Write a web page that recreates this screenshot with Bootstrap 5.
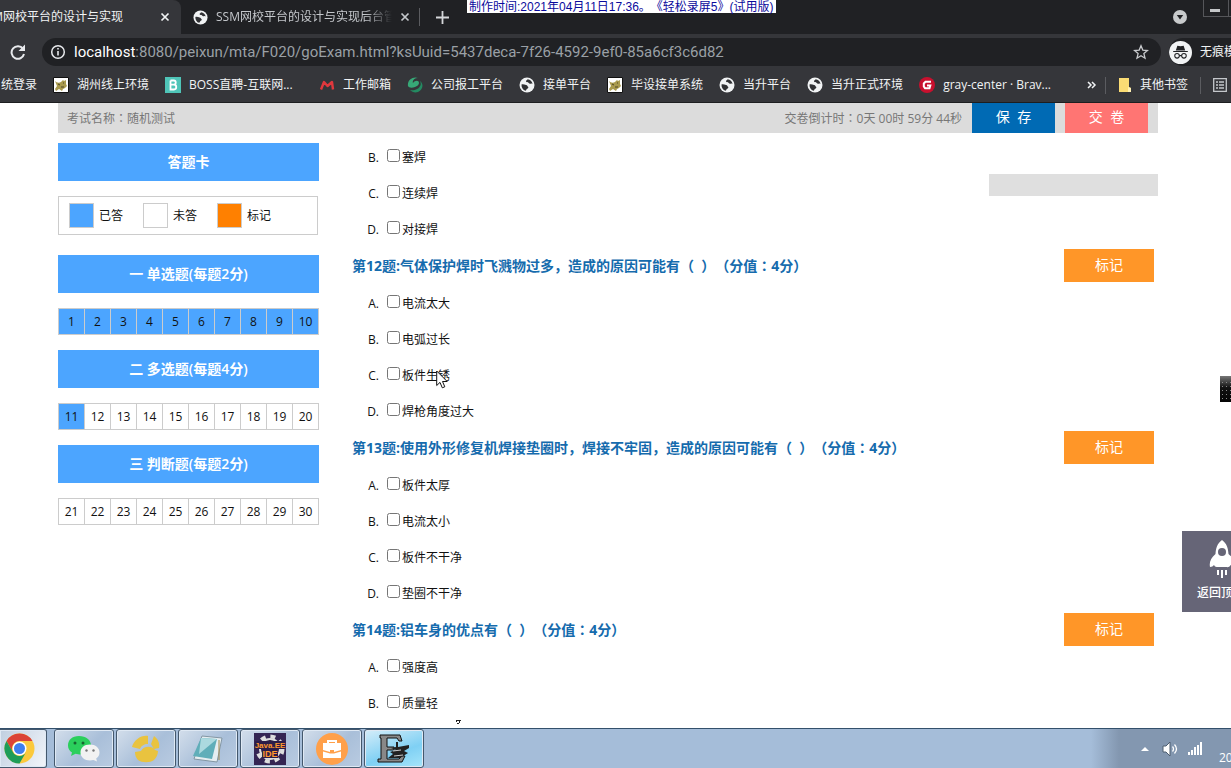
<!DOCTYPE html>
<html lang="zh-CN">
<head>
<meta charset="utf-8">
<meta name="viewport" content="width=device-width, initial-scale=1">
<title>随机测试</title>
<link href="https://cdn.jsdelivr.net/npm/bootstrap@5.3.0/dist/css/bootstrap.min.css" rel="stylesheet">
<style>
body{font:12px/20px "Open Sans","Noto Sans CJK SC",sans-serif;color:#111;background:#fff;text-spacing-trim:space-all;font-feature-settings:"chws" 0;font-kerning:none}
a{color:inherit;text-decoration:none}
svg{display:block;flex:none}
ol,ul{list-style:none;margin:0;padding:0}
/* centred full-width colon */
.colon{font-family:"Noto Sans CJK JP",sans-serif;line-height:1}
/* browser chrome */
.tabstrip{height:34px;background:#202124;color:#c4c7cb}
.tab-on{width:181px;background:#35363a;border-radius:0 8px 0 0;color:#f1f3f4;padding-right:11px}
.tab-on .tab-name{width:123px}
.tab-two{width:230px}
.tab-two .tab-name{width:176px;-webkit-mask-image:linear-gradient(90deg,#000 85%,transparent)}
.tab-x{width:10px;height:10px;padding:0;border:0;background:none;color:inherit}
.strip-line{width:1px;height:18px;background:#5b5c60}
.win-btn{width:28px;height:17px;border:1px solid #55565a;border-top:0;border-right:0;background:none;padding:0}
.stamp{left:467px;top:0;height:13px;padding:0 2px;background:#fff;color:#0a0a9c;font:12px/14px "Liberation Sans","Noto Sans CJK SC",sans-serif;z-index:5}
.toolbar{height:36px;background:#35363a}
.reload{margin:0 16px 0 8px}
.address{height:28px;background:#202124;border-radius:14px;color:#9aa0a6}
.address b{color:#fff;font-weight:400}
.address .url{font:15px/28px Roboto,sans-serif}
.incog{background:#202124;border-radius:14px 0 0 14px;height:28px;width:62px;color:#f1f3f4}
.bookmarks{height:33px;background:#35363a;border-bottom:1px solid #1d1e20;color:#f1f3f4;padding:0 0 2px 1px}
.bookmarks a{display:flex;align-items:center;gap:8px;margin-right:16px}
.bm-wide{width:114px}
.bm-line{width:1px;height:17px;background:#5b5c60}
/* exam page */
.exam{margin:0 73px 0 58px}
.exam-top{height:30px;background:#dcdcdc;color:#777;gap:10px;padding:0 10px 0 9px}
.exam-top div{padding-top:1px}
.top-btn{width:83px;height:30px;border:0;color:#fff;font-size:14px;line-height:28px;padding:0 0 2px}
.save{background:#006ab4}
.hand-in{background:#ff7573}
.side{width:261px;padding-top:10px;flex:none}
.side h2{height:38px;margin:0 0 15px;background:#4ca5ff;color:#fff;font-size:14px;line-height:38px;text-align:center;font-weight:600}
.legend-box{height:39px;border:1px solid #ccc;margin:0 1px 20px 0;padding-left:10px}
.legend-box span{display:block;width:44px}
.swatch{width:25px;height:25px;border:1px solid #ccc;margin-right:5px}
.done{background:#4ca5ff}
.flagged{background:#ff8000}
.sheet{display:grid;grid-template-columns:repeat(10,1fr);border:1px solid #ccc;border-right:0;margin-bottom:15px}
.sheet a{height:25px;line-height:25px;text-align:center;border-right:1px solid #ccc}
.questions{margin-left:33px;padding:6px 4px 0 0}
.q-head{height:38px}
.questions h3{margin:0;font-size:14px;line-height:38px;font-weight:700;color:#156bad;white-space:pre}
.mark-btn{width:90px;height:33px;border:0;background:#ff9628;color:#fff;font-size:14px;line-height:31px;padding:0 0 2px;margin-bottom:2px}
.opts li{height:36px;padding-top:2px;display:flex;align-items:center}
.opts span{width:27px;text-align:right;margin-right:8px}
.opts input{width:13px;height:13px;margin:0 2px 5px 0}
.notice{right:0;top:71px;width:169px;height:22px;background:#dfdfdf}
.to-top{right:0;top:428px;width:49px;height:81px;background:#666577;color:#fff;border:0;padding:0 0 0 15px;overflow:hidden}
.to-top span{display:block;white-space:nowrap;margin-top:5px;font-weight:500}
.grip{right:0;top:273px;width:11px;height:26px;background:linear-gradient(#777,#111 45%,#050505)}
.pointer{left:436px;top:267px}
.speck{left:456px;bottom:4px}
/* taskbar */
.taskbar{height:40px;background:#a5bdd9;border-top:1px solid #33506b;gap:2px}
.task{width:60px;height:39px;border:1px solid #44586d;border-radius:3px;background:linear-gradient(135deg,#d3deeb,#a9bfd9 55%,#b9cbe1);box-shadow:inset 0 0 0 1px #dfe9f4;padding:0;display:flex;align-items:center;justify-content:center}
.task-first{width:47px;border-left:0;border-radius:0 3px 3px 0;margin-right:5px;padding-right:8px;background:linear-gradient(120deg,#c0cfe0,#f2f5fa)}
.task-live{background:linear-gradient(160deg,#d5edf9,#7fd0f4 60%,#a6e5fa)}
.tray{width:140px;background:linear-gradient(90deg,#a5bdd9,#8397b0 28px);color:#fff;padding-left:49px}
</style>
</head>
<body class="vh-100 d-flex flex-column overflow-hidden position-relative">
<svg width="0" height="0" class="position-absolute" aria-hidden="true">
  <symbol id="globe" viewBox="0 0 16 16"><circle cx="8" cy="8" r="7.500" fill="#f1f3f4"/><path d="M2.500 7.500c1.500-.8 3 .3 4.600.5 1.300.2 1.200 1.500 2.200 1.900.3 1-.8 1.500-1.600 2.100-.3.800-.5 1.400-1.200 1.700-2.400-.5-4.200-3-4-6.200ZM8.500 2.300c-.3 1.200-1.700 1-1.500 2.200.5 1 1.800.4 2.500 1.200.4 1 1.700 1.300 2.700.8.6-.2 1 .1 1.300.4-.2-2.300-2.300-4.500-5-4.600Z" fill="#303134"/></symbol>
  <symbol id="cat" viewBox="0 0 16 16"><path d="M.5.5h15v15H.5z" fill="#fff" stroke="#111"/><path d="M2 4c2 2 4 2 6 1l2-2 1 1 2-1v4l1 2-2 2-2 1-1 2-3-2-3 2-1-2 2-3Z" fill="#a99a4d"/><path d="m5 7 2 1M10 6h1M8 10l3 0" stroke="#4c4527"/></symbol>
  <symbol id="cross" viewBox="0 0 10 10"><path d="m1.500 1.500 7 7m0-7-7 7" stroke="currentColor" stroke-width="1.700"/></symbol>
</svg>

<div class="tabstrip d-flex align-items-center flex-shrink-0">
  <div class="tab-on h-100 d-flex align-items-center">
    <div class="tab-name d-flex justify-content-end overflow-hidden text-nowrap"><span>M网校平台的设计与实现</span></div>
    <button class="tab-x ms-auto" aria-label="关闭"><svg width="10" height="10"><use href="#cross"/></svg></button>
  </div>
  <div class="tab-two d-flex align-items-center ps-2 ms-1">
    <svg width="15" height="15"><use href="#globe"/></svg>
    <div class="tab-name overflow-hidden text-nowrap ms-2">SSM网校平台的设计与实现后台管</div>
    <button class="tab-x ms-2" aria-label="关闭"><svg width="10" height="10"><use href="#cross"/></svg></button>
  </div>
  <div class="strip-line ms-1"></div>
  <button class="border-0 bg-transparent p-0 ms-3" aria-label="新标签页"><svg width="13" height="13" viewBox="0 0 13 13"><path d="M6.500 0v13M0 6.500h13" stroke="#d5d7da" stroke-width="1.800"/></svg></button>
  <svg class="ms-auto me-3" width="14" height="14" viewBox="0 0 14 14"><circle cx="7" cy="7" r="7" fill="#c8cacc"/><path d="m3.800 5 3.200 4.500L10.200 5Z" fill="#202124"/></svg>
  <button class="win-btn align-self-start" aria-label="最小化"><svg width="27" height="16"><path d="M6 9h10v3H6z" fill="#c5c7c9"/><path d="M24.500 0v16" stroke="#55565a"/></svg></button>
</div>
<div class="stamp position-absolute text-nowrap">制作时间:2021年04月11日17:36。《轻松录屏5》(试用版)</div>

<div class="toolbar d-flex align-items-center flex-shrink-0">
  <svg class="reload" width="18" height="16" viewBox="1 0 18 16"><path d="M16 4.800A6.300 6.300 0 1 0 17 10" fill="none" stroke="#e8eaed" stroke-width="2"/><path d="M18 .5V7h-6.500Z" fill="#e8eaed"/></svg>
  <div class="address flex-grow-1 d-flex align-items-center ps-2 pe-2">
    <svg class="me-2" width="16" height="16" viewBox="0 0 16 16"><circle cx="8" cy="8" r="6.300" fill="none" stroke="#e8eaed" stroke-width="1.500"/><path d="M8 7v4.500M8 4v1.600" stroke="#e8eaed" stroke-width="1.600"/></svg>
    <div class="url text-nowrap"><b>localhost</b>:8080/peixun/mta/F020/goExam.html?ksUuid=5437deca-7f26-4592-9ef0-85a6cf3c6d82</div>
    <svg class="ms-auto me-1" width="16" height="16" viewBox="0 0 16 16"><path d="m8 1.800 1.800 4.300 4.700.4-3.600 3.100 1.100 4.600L8 11.700l-4 2.500 1.100-4.600-3.600-3.100 4.700-.4Z" fill="none" stroke="#c9cbce" stroke-width="1.300"/></svg>
  </div>
  <div class="incog d-flex align-items-center ms-2 text-nowrap overflow-hidden">
    <svg class="me-2" width="23" height="23" viewBox="0 0 22 22"><circle cx="11" cy="11" r="11" fill="#f1f3f4"/><path d="M8 4.500 11 5l3-.5L15.500 9h-9ZM4 9.500h14v1H4Z" fill="#202124"/><circle cx="7.700" cy="14.200" r="2.200" fill="none" stroke="#202124"/><circle cx="14.300" cy="14.200" r="2.200" fill="none" stroke="#202124"/><path d="M9.900 14h2.200" stroke="#202124"/></svg>无痕模式
  </div>
</div>

<nav class="bookmarks d-flex align-items-center flex-shrink-0 text-nowrap overflow-hidden">
  <a href="#">统登录</a>
  <a href="#"><svg width="16" height="16"><use href="#cat"/></svg>湖州线上环境</a>
  <a href="#"><svg width="16" height="16" viewBox="0 0 16 16"><path d="M0 0h16v16H0z" fill="#4fc5b8"/><path d="M5.500 3.500h3.300c2.600 0 2.600 4.200 0 4.200H5.500m3.500 0c3 0 3 4.800 0 4.800H5.500v-9" fill="none" stroke="#fff" stroke-width="1.800"/></svg><span class="bm-wide">BOSS直聘-互联网...</span></a>
  <a href="#"><svg width="16" height="16" viewBox="0 0 16 16"><path d="M2 12.500 5 5l3.500 4L13 5l1 7.500" fill="none" stroke="#e0383d" stroke-width="2.400" stroke-linejoin="round"/></svg>工作邮箱</a>
  <a href="#"><svg width="16" height="16" viewBox="0 0 16 16"><path d="M1 9C0 3 6-1 11 1c-4 0-6 3-5 5 2-3 6-3 6 0 0 2-2 3-4 4-3 1-6 1-7-1Z" fill="#37a877"/><path d="M3 13c4 1 9-1 10-4 1-1 1-3 0-5 4 3 3 9-2 11-3 1-6 0-8-2Z" fill="#248b62"/></svg>公司报工平台</a>
  <a href="#"><svg width="16" height="16"><use href="#globe"/></svg>接单平台</a>
  <a href="#"><svg width="16" height="16"><use href="#cat"/></svg>毕设接单系统</a>
  <a href="#"><svg width="16" height="16"><use href="#globe"/></svg>当升平台</a>
  <a href="#"><svg width="16" height="16"><use href="#globe"/></svg>当升正式环境</a>
  <a href="#"><svg width="16" height="16" viewBox="0 0 16 16"><circle cx="8" cy="8" r="8" fill="#c8102e"/><path d="M12 4.800H6.500L4.800 6.500v3l1.200 1.700h4.500l.8-2.700H8" fill="none" stroke="#fff" stroke-width="2"/></svg><span class="bm-wide">gray-center · Brav...</span></a>
  <button class="border-0 bg-transparent text-white p-0 ms-auto me-2" aria-label="更多书签"><svg width="10" height="8" viewBox="0 0 10 8"><path d="m1 1 3 3-3 3m4-6 3 3-3 3" fill="none" stroke="#f1f3f4" stroke-width="1.500"/></svg></button>
  <div class="bm-line me-2"></div>
  <a class="ms-1 me-2" href="#"><svg width="14" height="16" viewBox="0 0 14 16"><path d="M1 1h10v9l2 1v4H1z" fill="#fbdc74"/><path d="M10 10v5h3v-4z" fill="#fff0b2"/></svg>其他书签</a>
  <div class="bm-line ms-1"></div>
  <svg class="ms-2 me-1" width="18" height="14" viewBox="-4 0 18 14"><path d="M.7.700h12.600v12.600H.7zM3 4h2m1 0h5M3 7h2m1 0h5M3 10h2m1 0h5" fill="none" stroke="#c4c7cb" stroke-width="1.300"/></svg>
</nav>

<main class="flex-grow-1 position-relative overflow-hidden">
  <div class="exam position-relative">
    <header class="exam-top d-flex align-items-center">
      <div>考试名称<span class="colon" lang="ja">：</span>随机测试</div>
      <div class="ms-auto">交卷倒计时<span class="colon" lang="ja">：</span>0天 00时 59分 44秒</div>
      <button class="top-btn save">保&nbsp; 存</button>
      <button class="top-btn hand-in">交&nbsp; 卷</button>
    </header>
    <div class="notice position-absolute"></div>
    <div class="d-flex">
      <aside class="side">
        <h2>答题卡</h2>
        <div class="legend-box d-flex align-items-center">
          <i class="swatch done"></i><span>已答</span>
          <i class="swatch"></i><span>未答</span>
          <i class="swatch flagged"></i><span>标记</span>
        </div>
        <h2>一 单选题(每题2分)</h2>
        <div class="sheet">
          <a href="#" class="done">1</a><a href="#" class="done">2</a><a href="#" class="done">3</a><a href="#" class="done">4</a><a href="#" class="done">5</a><a href="#" class="done">6</a><a href="#" class="done">7</a><a href="#" class="done">8</a><a href="#" class="done">9</a><a href="#" class="done">10</a>
        </div>
        <h2>二 多选题(每题4分)</h2>
        <div class="sheet">
          <a href="#" class="done">11</a><a href="#q12">12</a><a href="#q13">13</a><a href="#q14">14</a><a href="#">15</a><a href="#">16</a><a href="#">17</a><a href="#">18</a><a href="#">19</a><a href="#">20</a>
        </div>
        <h2>三 判断题(每题2分)</h2>
        <div class="sheet">
          <a href="#">21</a><a href="#">22</a><a href="#">23</a><a href="#">24</a><a href="#">25</a><a href="#">26</a><a href="#">27</a><a href="#">28</a><a href="#">29</a><a href="#">30</a>
        </div>
      </aside>
      <section class="questions flex-grow-1">
        <ol class="opts">
          <li><span>B.</span><input type="checkbox" id="a11b"><label for="a11b">塞焊</label></li>
          <li><span>C.</span><input type="checkbox" id="a11c"><label for="a11c">连续焊</label></li>
          <li><span>D.</span><input type="checkbox" id="a11d"><label for="a11d">对接焊</label></li>
        </ol>
        <div class="q-head d-flex align-items-center justify-content-between" id="q12"><h3>第12题:气体保护焊时飞溅物过多，造成的原因可能有（  ）（分值<span class="colon" lang="ja">：</span>4分）</h3><button class="mark-btn">标记</button></div>
        <ol class="opts">
          <li><span>A.</span><input type="checkbox" id="a12a"><label for="a12a">电流太大</label></li>
          <li><span>B.</span><input type="checkbox" id="a12b"><label for="a12b">电弧过长</label></li>
          <li><span>C.</span><input type="checkbox" id="a12c"><label for="a12c">板件生锈</label></li>
          <li><span>D.</span><input type="checkbox" id="a12d"><label for="a12d">焊枪角度过大</label></li>
        </ol>
        <div class="q-head d-flex align-items-center justify-content-between" id="q13"><h3>第13题:使用外形修复机焊接垫圈时，焊接不牢固，造成的原因可能有（  ）（分值<span class="colon" lang="ja">：</span>4分）</h3><button class="mark-btn">标记</button></div>
        <ol class="opts">
          <li><span>A.</span><input type="checkbox" id="a13a"><label for="a13a">板件太厚</label></li>
          <li><span>B.</span><input type="checkbox" id="a13b"><label for="a13b">电流太小</label></li>
          <li><span>C.</span><input type="checkbox" id="a13c"><label for="a13c">板件不干净</label></li>
          <li><span>D.</span><input type="checkbox" id="a13d"><label for="a13d">垫圈不干净</label></li>
        </ol>
        <div class="q-head d-flex align-items-center justify-content-between" id="q14"><h3>第14题:铝车身的优点有（  ）（分值<span class="colon" lang="ja">：</span>4分）</h3><button class="mark-btn">标记</button></div>
        <ol class="opts">
          <li><span>A.</span><input type="checkbox" id="a14a"><label for="a14a">强度高</label></li>
          <li><span>B.</span><input type="checkbox" id="a14b"><label for="a14b">质量轻</label></li>
        </ol>
      </section>
    </div>
  </div>
  <div class="grip position-absolute"><svg width="11" height="26"><path d="M2 6.500h9M2 10.500h9M2 14.500h9M2 18.500h9M2 22.500h9" stroke="#888" stroke-dasharray="1 3"/></svg></div>
  <button class="to-top position-absolute text-start"><svg class="ms-2" width="38" height="38" viewBox="-4 0 38 38"><path d="M13 0c5 4 6 8 6.500 14 5 4 7 8 6 13-2 0-3-1-4-2-1 3-4 2-4.500 2H9c-2 0-3 0-4-2-1 1-2 2-4 2-1-5 1-9 5.500-13C7 8 8 4 13 0ZM12 30h2v8h-2zm-4 0h2v5H8zm8 0h2v5h-2z" fill="#fff"/><circle cx="13" cy="12" r="4" fill="#666577"/></svg><span>返回顶部</span></button>
  <svg class="pointer position-absolute" width="12" height="20" viewBox="0 0 12 20"><path d="M.7 1v14.500L4 12.400l2.300 5.400 2.500-1-2.300-5.300h4.700Z" fill="#fff" stroke="#111"/></svg>
  <svg class="speck position-absolute" width="6" height="4"><path d="M0 .5h5M.5 0v2M3.500 1v2M1 3.500h2" stroke="#222"/></svg>
</main>

<footer class="taskbar d-flex flex-shrink-0">
  <button class="task task-first" aria-label="Chrome"><svg width="31" height="31" viewBox="0 0 31 31"><circle cx="15.500" cy="15.500" r="15" fill="#fbc93c"/><path d="M2.500 8A15 15 0 0 1 28.500 8h-13a7.500 7.500 0 0 0-6.500 11.200Z" fill="#db4437"/><path d="M2.500 8A15 15 0 0 0 15.500 30.500L22 19.200A7.500 7.500 0 0 1 9 19.200Z" fill="#1e9d58"/><circle cx="15.500" cy="15.500" r="7" fill="#fff"/><circle cx="15.500" cy="15.500" r="5.500" fill="#3f7fee"/></svg></button>
  <button class="task" aria-label="微信"><svg width="34" height="28" viewBox="0 0 34 28"><path d="M12 1C5 1 1 5 1 10.500c0 3 1.500 5.500 4 7L4 21l4.500-2.200 4 .7C20 19.500 24 15 24 10.500 24 5 19 1 12 1Z" fill="#2bcf5c"/><circle cx="8" cy="8" r="1.500" fill="#16652f"/><circle cx="16" cy="8" r="1.500" fill="#16652f"/><path d="M23 9.500c-6 0-9.500 3.500-9.500 8s4 8 9.500 8l3.500-.6 3.500 1.600-.8-3c2.200-1.500 3.300-3.500 3.300-6 0-4.500-4-8-9.500-8Z" fill="#f2f2f2"/><circle cx="19.500" cy="15.500" r="1.200" fill="#777"/><circle cx="26.500" cy="15.500" r="1.200" fill="#777"/></svg></button>
  <button class="task" aria-label="应用"><svg width="30" height="28" viewBox="0 0 30 28"><path d="M17 1v8c-4 0-7 2-8 5L1 12C3 5 10 0 17 1ZM20 9l3-8c4 3 6 7 5 12l-5 1ZM4 17l6-1c2-5 11-6 14-1l3 1c0 4-2 7-4 9-4 3-12 3-16 0-2-2-3-5-3-8Z" fill="#e9c33f"/></svg></button>
  <button class="task" aria-label="记事本"><svg width="32" height="30" viewBox="0 0 32 30"><path d="m10 2 20 2-5 24L2 25Z" fill="#e5edf0" stroke="#8396a3"/><path d="M9 4 25 5l-5 20L1 22Z" fill="#60aeb9"/><path d="M9 4 25 5 7 20Z" fill="#acd9df"/><path d="M27 6v20" stroke="#a38b51"/></svg></button>
  <button class="task" aria-label="Java EE IDE"><svg width="32" height="32" viewBox="0 0 32 32"><path d="M0 0h32v32H0z" fill="#342553"/><circle cx="16" cy="16" r="12.500" fill="none" stroke="#ddd" stroke-width="4" stroke-dasharray="5 4.820"/><circle cx="16" cy="16" r="10" fill="#24163c" stroke="#ddd" stroke-width="2"/><path d="M1 8h30v8H1zM8 16h16v9H8z" fill="#2c1d49"/><text x="16" y="15" text-anchor="middle" font-family="Liberation Sans" font-size="8" font-weight="bold" fill="#ff982d">Java.EE</text><text x="16" y="24" text-anchor="middle" font-family="Liberation Sans" font-size="9" font-weight="bold" fill="#ff982d">IDE</text></svg></button>
  <button class="task" aria-label="公文包"><svg width="32" height="32" viewBox="0 0 32 32"><circle cx="16" cy="16" r="16" fill="#ffa04a"/><path d="M7 10h4V7h10v3h4v7l-7 2v-2h-4v2l-7-2Zm6-1v1h6V9ZM7 18.500l7 2h4l7-2V25H7Z" fill="#fff"/></svg></button>
  <button class="task task-live" aria-label="录屏"><svg width="34" height="32" viewBox="0 0 34 32"><path d="M3 2h20l2 6h-3l-2-3H10v9h7v3h-7v9h12l3-3h3l-3 6H1v-3h3V5H3Z" fill="#888" stroke="#111"/><path d="m14 15 5-1V9h2v5l11-2v3l-5 3 4 2-8 5H11l5-4-3-2 6-2Z" fill="#222"/><path d="m16 18 8-1M17 23l9-1" stroke="#ccc"/></svg></button>
  <div class="tray ms-auto d-flex">
    <div class="d-flex align-items-center gap-2">
      <svg width="10" height="6" viewBox="0 0 10 6"><path d="m1 5 4-4 4 4Z" fill="#fff"/></svg>
      <svg class="ms-1" width="17" height="14" viewBox="0 0 17 14"><path d="M1 4h3l4-4v14l-4-4H1Z" fill="#fff" stroke="#4e5e70"/><path d="M10.500 4.500q2 2.500 0 5M12.500 2.500q4 4.500 0 9" fill="none" stroke="#fff" stroke-width="1.300"/></svg>
      <svg width="16" height="13" viewBox="0 0 16 13"><path d="M1 10h2v3H1zm3-2h2v5H4zm3-3h2v8H7zm3-2h2v10h-2zm3-3h2v13h-2z" fill="#fff"/></svg>
    </div>
    <div class="align-self-end ms-3 text-nowrap">20</div>
  </div>
</footer>
<script src="https://cdn.jsdelivr.net/npm/bootstrap@5.3.0/dist/js/bootstrap.bundle.min.js"></script>
</body>
</html>
